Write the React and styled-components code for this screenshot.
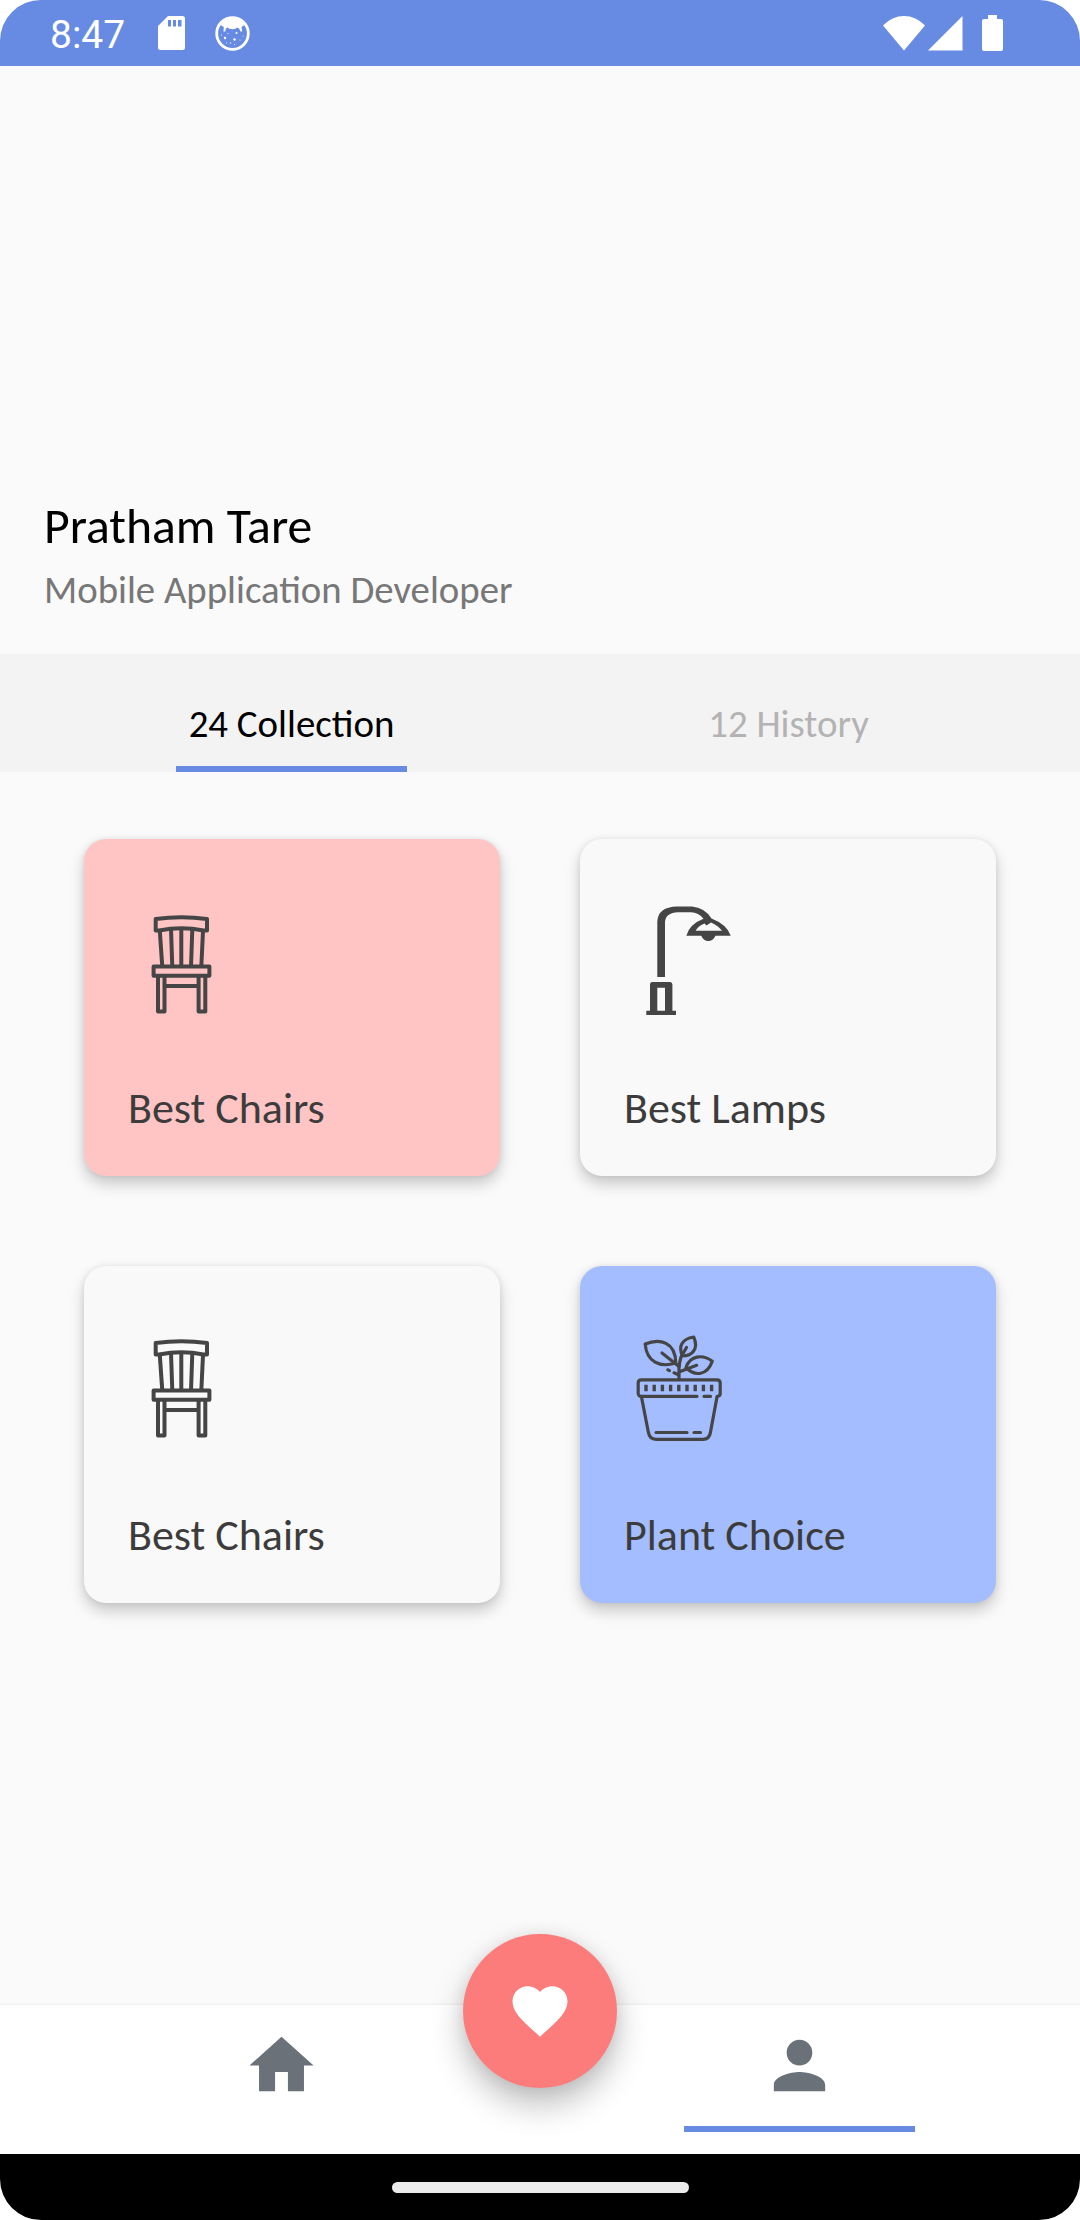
import React from "react";
import styled, { createGlobalStyle } from "styled-components";

const colors = {
  primary: "#678be2",
  page: "#fafafa",
  tabBar: "#f3f3f3",
  pink: "#ffc5c4",
  blue: "#a4bdff",
  plain: "#f9f9f9",
  heart: "#fc7c7b",
  ink: "#454545",
  navIcon: "#6a7178",
};

const GlobalStyle = createGlobalStyle`
  * { box-sizing: border-box; }
  body {
    margin: 0;
    background: #fff;
    font-family: Carlito, Calibri, Lato, sans-serif;
  }
`;

const Phone = styled.div`
  width: 1080px;
  height: 2220px;
  display: flex;
  flex-direction: column;
  overflow: hidden;
  border-radius: 41px;
  background: ${colors.page};
`;

const StatusBar = styled.header`
  height: 66px;
  flex: none;
  display: flex;
  align-items: center;
  padding: 0 77px 0 50px;
  background: ${colors.primary};
  color: #fff;
`;

const Clock = styled.time`
  width: 108px;
  padding-top: 4px;
  font: 39px/62px Roboto, sans-serif;
`;

const StatusIcons = styled.div`
  display: flex;
  align-items: center;
  gap: ${(p) => p.$gap}px;
  margin-left: ${(p) => (p.$end ? "auto" : "0")};
`;

const Icon = styled.svg`
  display: block;
  flex: none;
  width: ${(p) => p.$w}px;
  height: ${(p) => p.$h}px;
`;

const Profile = styled.section`
  height: 588px;
  flex: none;
  display: flex;
  flex-direction: column;
  justify-content: flex-end;
  padding: 0 44px 41px;
`;

const Name = styled.h1`
  margin: 0;
  font-size: 49.7px;
  font-weight: 400;
  line-height: 61px;
  color: #000;
`;

const Role = styled.p`
  margin: 9px 0 0;
  font-size: 38.8px;
  line-height: 47px;
  color: #777;
`;

const Tabs = styled.nav`
  height: 118px;
  flex: none;
  display: grid;
  grid-template-columns: 1fr 1fr;
  justify-items: center;
  padding: 0 43px;
  background: ${colors.tabBar};
`;

const Tab = styled.button`
  width: 231px;
  display: flex;
  align-items: flex-end;
  justify-content: center;
  padding: 0 0 19px;
  border: 0;
  border-bottom: 6px solid ${(p) => (p.$active ? colors.primary : "transparent")};
  background: none;
  font: inherit;
  font-size: 38.9px;
  line-height: 47px;
  white-space: nowrap;
  color: ${(p) => (p.$active ? "#000" : "#b3b3b3")};
`;

const Content = styled.main`
  flex: 1;
  display: grid;
  grid-template-columns: 416px 416px;
  grid-auto-rows: 337px;
  justify-content: center;
  gap: 90px 80px;
  padding-top: 67px;
`;

const Card = styled.article`
  display: flex;
  flex-direction: column;
  justify-content: space-between;
  padding: ${(p) => p.$top}px 44px 41px;
  border-radius: 22px;
  background: ${(p) => p.$tone};
  box-shadow: 0 8px 15px rgba(0, 0, 0, 0.2), 0 0 6px rgba(0, 0, 0, 0.08);
`;

const CardTitle = styled.h2`
  margin: 0;
  font-size: 44px;
  font-weight: 400;
  line-height: 54px;
  color: #3c3c3c;
`;

const BottomNav = styled.nav`
  height: 149px;
  flex: none;
  display: grid;
  grid-template-columns: repeat(3, 259px);
  justify-content: center;
  justify-items: center;
  background: #fff;
  box-shadow: 0 -1px 2px rgba(0, 0, 0, 0.06);
`;

const NavItem = styled.button`
  width: 231px;
  height: 127px;
  padding: 22px 0 0;
  display: flex;
  justify-content: center;
  align-items: flex-start;
  border: 0;
  border-bottom: 6px solid ${(p) => (p.$active ? colors.primary : "transparent")};
  background: none;
`;

const Fab = styled.button`
  width: 154px;
  height: 154px;
  margin-top: -71px;
  padding: 0;
  display: flex;
  align-items: center;
  justify-content: center;
  border: 0;
  border-radius: 50%;
  background: ${colors.heart};
  box-shadow: 0 17px 32px rgba(0, 0, 0, 0.25), 0 0 16px rgba(0, 0, 0, 0.08);
`;

const GestureBar = styled.footer`
  height: 66px;
  flex: none;
  display: flex;
  align-items: center;
  justify-content: center;
  background: #000;
`;

const Handle = styled.div`
  width: 297px;
  height: 11px;
  border-radius: 6px;
  background: #ebebeb;
`;

const BatterySlot = styled.div`
  margin-left: 19px;
`;

const SdCard = () => (
  <Icon $w={27} $h={34} viewBox="0 0 27 34">
    <path
      fill="#fff"
      fillRule="evenodd"
      d="M10 0H24.5A2.5 2.5 0 0 1 27 2.5V31.5A2.5 2.5 0 0 1 24.5 34H2.5A2.5 2.5 0 0 1 0 31.5V10ZM10 4V10.5H13V4ZM15 4V10.5H18V4ZM20 4V10.5H23.5V4Z"
    />
  </Icon>
);

const CatFace = () => (
  <Icon $w={35} $h={35} viewBox="0 0 35 35">
    <circle cx="17.5" cy="17.5" r="15.8" fill="none" stroke="#fff" strokeWidth="2.8" />
    <path
      fill="#fff"
      d="M5.500 9Q10 2 17.500 2T29.500 9L26.500 11L27.200 15.500L25.500 15.500Q24.800 12.500 22.500 11.500Q20.500 13.200 17.500 13.200T12 11.500Q10.500 12.500 10.200 15.500L8.500 15.500L8.800 11Z"
    />
    <g fill="#fff">
      <circle cx="10" cy="22" r="1.2" />
      <circle cx="19.5" cy="23.5" r="1.2" />
      <circle cx="21.5" cy="17" r="1" />
      <circle cx="6.5" cy="19" r=".6" />
      <circle cx="13" cy="17.5" r=".6" />
      <circle cx="15.5" cy="27" r=".7" />
      <circle cx="25" cy="24" r=".6" />
      <circle cx="28" cy="20" r=".5" />
      <circle cx="11.500" cy="27" r=".5" />
      <circle cx="19.5" cy="28.5" r=".5" />
    </g>
  </Icon>
);

const Wifi = () => (
  <Icon $w={42} $h={35} viewBox="0 0 42 35">
    <path fill="#fff" d="M0 9.500Q9 0 21 0T42 9.500L21 34.500Z" />
  </Icon>
);

const Signal = () => (
  <Icon $w={35} $h={35} viewBox="0 0 35 35">
    <path fill="#fff" d="M0 34.500L34.500 0V34.500Z" />
  </Icon>
);

const Battery = () => (
  <Icon $w={21} $h={36} viewBox="0 0 21 36">
    <path
      fill="#fff"
      d="M6 0H15V4H19A2 2 0 0 1 21 6V34A2 2 0 0 1 19 36H2A2 2 0 0 1 0 34V6A2 2 0 0 1 2 4H6Z"
    />
  </Icon>
);

const Chair = () => (
  <Icon $w={110} $h={130} viewBox="44 60 110 130">
    <g fill="none" stroke={colors.ink} strokeWidth="4" strokeLinejoin="round">
      <path d="M71.700 80Q97.300 76.300 123 80V91.500H119.500Q97.300 87.200 75.200 91.500H71.700Z" />
      <path d="M75.800 92L78.300 128M87 90L88.300 128M97.300 89V128M108.300 90L107 128M119 92L117.300 128" />
      <path d="M69.600 127.500H125.400V136.700H69.600Z" />
      <path d="M74 137V172.500H80.500V137M114.600 137V172.500H121.300V137M80.500 147H114.600" />
    </g>
  </Icon>
);

const Lamp = () => (
  <Icon $w={110} $h={130} viewBox="44 60 110 130">
    <path
      fill={colors.ink}
      fillRule="evenodd"
      d="M77.300 138V82.500Q78 68 97 67.500H112Q124.500 68.500 131.500 79.500Q147 85.500 150.800 96.800H135.500Q133 102 128.300 102T121.200 96.800H106.300Q109.500 85 123.500 79.700Q118.500 73.300 111 73.200H98Q85.500 73.800 85 83V138ZM128 85.500L126.500 86.500L124.500 84.500Q117.500 87.500 115.700 91.700H142Q138.500 87 131 83.500Z"
    />
    <path
      fill={colors.ink}
      fillRule="evenodd"
      d="M66.300 171.700H70V145.500Q70 143 72.500 143H90Q92.400 143 92.400 145.500V171.700H96V176H66.300ZM77.300 148.700V171.700H85V148.700Z"
    />
  </Icon>
);

const Plant = () => (
  <Icon $w={110} $h={130} viewBox="44 60 110 130">
    <g fill="none" stroke={colors.ink} strokeWidth="3.200" strokeLinejoin="round" strokeLinecap="round">
      <path d="M61.500 130.300H60Q58.200 129.500 58.200 127.500V117Q58.200 113.800 61.200 113.800H137Q140.200 113.800 140.200 117V127.500Q140.200 130.300 137.200 130.300" />
      <path d="M61.500 130.300H117M124 130.300H130.500" />
      <path d="M61.500 131L68.300 166Q69.500 173.300 76 173.300H123Q129.500 173.300 130.500 166L137 131" />
      <path d="M76 166.500H107M114 166.500H120.500" />
      <path d="M65.200 78C80 72 95.500 76 95.800 97C80 102 66.500 96 65.200 78Z" />
      <path d="M82 87L99 100.500" />
      <path d="M99 113V102Q99.500 96 101 91L106.500 81.500" />
      <path d="M113.700 71C102 73 98 80 102.500 90C112 90 119 83 113.700 71Z" />
      <path d="M132.300 95.300C122 87.500 110 90 106 101.500C115 110.500 127 110 132.300 95.300Z" />
      <path d="M116.700 99.300L99.500 105.700" />
      <path d="M87.800 103.800L89.500 104.600M94 106.800L98.500 108.800" />
    </g>
    <path
      fill="none"
      stroke={colors.ink}
      strokeWidth="6.500"
      strokeDasharray="3.400 4.800"
      d="M64.300 122H134"
    />
  </Icon>
);

const Home = () => (
  <Icon $w={77} $h={77} viewBox="0 0 24 24">
    <path fill={colors.navIcon} d="M10 20v-6h4v6h5v-8h3L12 3 2 12h3v8z" />
  </Icon>
);

const Person = () => (
  <Icon $w={77} $h={77} viewBox="0 0 24 24">
    <path
      fill={colors.navIcon}
      d="M12 12c2.210 0 4-1.790 4-4s-1.790-4-4-4-4 1.790-4 4 1.790 4 4 4zm0 2c-2.670 0-8 1.340-8 4v2h16v-2c0-2.660-5.330-4-8-4z"
    />
  </Icon>
);

const Heart = () => (
  <Icon $w={66} $h={66} viewBox="0 0 24 24">
    <path
      fill="#fff"
      d="M12 21.350l-1.450-1.320C5.400 15.360 2 12.280 2 8.500 2 5.420 4.420 3 7.500 3c1.740 0 3.410.810 4.500 2.090C13.090 3.810 14.760 3 16.500 3 19.580 3 22 5.420 22 8.500c0 3.780-3.400 6.860-8.550 11.540L12 21.350z"
    />
  </Icon>
);

const collections = [
  { title: "Best Chairs", tone: colors.pink, Art: Chair, top: 60 },
  { title: "Best Lamps", tone: colors.plain, Art: Lamp, top: 60 },
  { title: "Best Chairs", tone: colors.plain, Art: Chair, top: 57 },
  { title: "Plant Choice", tone: colors.blue, Art: Plant, top: 60 },
];

export default function App() {
  return (
    <>
      <GlobalStyle />
      <Phone>
        <StatusBar>
          <Clock>8:47</Clock>
          <StatusIcons $gap={30}>
            <SdCard />
            <CatFace />
          </StatusIcons>
          <StatusIcons $end $gap={0}>
            <StatusIcons $gap={3}>
              <Wifi />
              <Signal />
            </StatusIcons>
            <BatterySlot>
              <Battery />
            </BatterySlot>
          </StatusIcons>
        </StatusBar>
        <Profile>
          <Name>Pratham Tare</Name>
          <Role>Mobile Application Developer</Role>
        </Profile>
        <Tabs>
          <Tab $active>24 Collection</Tab>
          <Tab>12 History</Tab>
        </Tabs>
        <Content>
          {collections.map(({ title, tone, Art, top }, i) => (
            <Card key={i} $tone={tone} $top={top}>
              <Art />
              <CardTitle>{title}</CardTitle>
            </Card>
          ))}
        </Content>
        <BottomNav>
          <NavItem aria-label="Home">
            <Home />
          </NavItem>
          <Fab aria-label="Favourites">
            <Heart />
          </Fab>
          <NavItem $active aria-label="Profile">
            <Person />
          </NavItem>
        </BottomNav>
        <GestureBar>
          <Handle />
        </GestureBar>
      </Phone>
    </>
  );
}
